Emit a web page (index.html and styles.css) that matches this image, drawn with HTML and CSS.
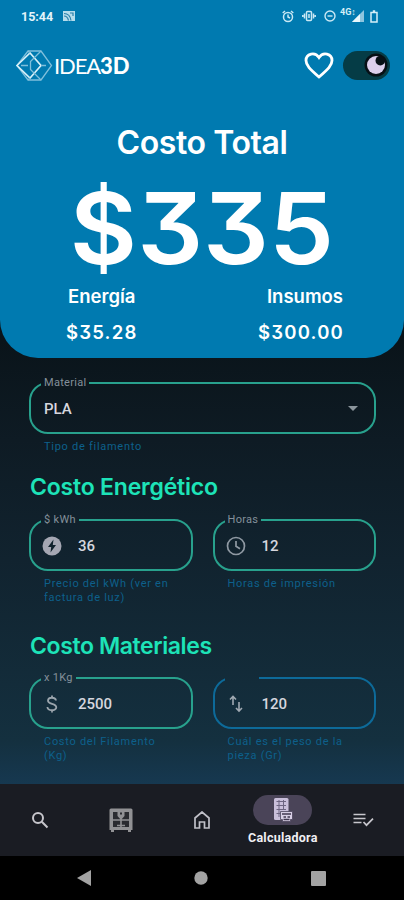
FILE: index.html
```html
<!DOCTYPE html>
<html lang="es">
  <head>
    <meta charset="UTF-8" />
    <meta name="viewport" content="width=device-width, initial-scale=1.0" />
    <title>IDEA3D - Calculadora</title>
    <link rel="stylesheet" href="styles.css">
  </head>
  <body>
    <header class="hero">
      <div class="status">
        <span class="time">15:44</span>
        <svg class="cast" width="14" height="12" viewBox="0 0 14 12"><path d="M1 1h12v10H1z" fill="#b5dcec" /><path d="M2 3.5q6 0 7 7M2 6q3.500 0 4.500 4.500M8 3h3v3" fill="none" stroke="#287fa9" stroke-width="1.200" /></svg>
        <div class="status-icons">
          <svg width="12" height="13" viewBox="0 0 12 13" fill="none" stroke="#c9e8f4" stroke-width="1.500"><circle cx="6" cy="7" r="4.500" /><path d="M6 4.500V7l2 1M.7 3 3 1M11.300 3 9 1" /></svg>
          <svg width="14" height="12" viewBox="0 0 14 12" fill="none" stroke="#c9e8f4" stroke-width="1.500"><rect x="4.500" y="1.500" width="5" height="9" rx="1" /><path d="M2.500 3.500v5M11.500 3.500v5M.8 5v2M13.200 5v2M7 4v4" /></svg>
          <svg width="12" height="12" viewBox="0 0 12 12" fill="none" stroke="#c9e8f4" stroke-width="1.400"><circle cx="6" cy="6" r="5" /><path d="M3.500 6h5" /></svg>
          <span class="net">4G↕</span>
          <svg class="signal" width="12" height="12" viewBox="0 0 12 12"><path d="M0 12 12 0v12z" fill="#8dc5df" /><path d="M0 12 8 4v8z" fill="#e8f7fc" /></svg>
          <svg class="battery" width="8" height="13" viewBox="0 0 8 13" fill="none" stroke="#d5eff7" stroke-width="1.500"><path d="M1 2.500h6v9.500H1zM2.800 1h2.400" /></svg>
        </div>
      </div>

      <div class="appbar">
        <svg class="cube" width="37" height="31" viewBox="0 0 37 31" fill="none" stroke="#a9d7ea" stroke-width="1.300">
          <path d="M1 15.500 12 1h13l10.500 14.500L25 30H12z" stroke="#7fbfdb" />
          <path d="M1 15.500 14 3l11 12.500L14 28z" stroke="#d8f0f8" stroke-width="1.600" />
          <path d="M14 3 12 1M14 28l-2 2M25 1 14.500 11.500v8L25 30M5 15.500h7M25 15.500h5" stroke="#7fbfdb" />
        </svg>
        <div class="brand"><span>IDEA</span><b>3D</b></div>
        <svg class="heart" width="30" height="27" viewBox="0 0 30 27"><path d="M15 25 C6 17 2 13.500 2 8.500 C2 1.500 11 -.5 15 5.500 C19 -.5 28 1.500 28 8.500 C28 13.500 24 17 15 25z" fill="none" stroke="#fff" stroke-width="2.800" /></svg>
        <div class="switch">
          <svg width="24" height="24" viewBox="0 0 24 24"><circle cx="12" cy="12" r="11.500" fill="#071016" /><circle cx="12" cy="12" r="9" fill="#dccfec" /><circle cx="16.300" cy="7.700" r="4.800" fill="#071016" /></svg>
        </div>
      </div>

      <h1>Costo Total</h1>
      <div class="total">$335</div>
      <div class="breakdown">
        <div class="energy">
          <h3>Energía</h3>
          <p>$35.28</p>
        </div>
        <div class="supplies">
          <h3>Insumos</h3>
          <p>$300.00</p>
        </div>
      </div>
    </header>

    <main>
      <div class="field">
        <fieldset>
          <legend>Material</legend>
          <span class="value">PLA</span>
          <svg class="caret" width="10" height="5" viewBox="0 0 10 5"><path d="M0 0h10L5 5z" fill="#8b959c" /></svg>
        </fieldset>
        <p class="hint">Tipo de filamento</p>
      </div>

      <h2>Costo Energético</h2>
      <div class="row">
        <div class="field">
          <fieldset>
            <legend>$ kWh</legend>
            <svg class="lead" width="20" height="20" viewBox="0 0 20 20"><circle cx="10" cy="10" r="9.500" fill="#a5a7b3" /><path d="M11.500 3.500 6 11h3.200L8.500 16.500 14 9h-3.200z" fill="#10222d" /></svg>
            <span class="value">36</span>
          </fieldset>
          <p class="hint">Precio del kWh (ver en<br>factura de luz)</p>
        </div>
        <div class="field">
          <fieldset>
            <legend>Horas</legend>
            <svg class="lead" width="20" height="20" viewBox="0 0 20 20" fill="none" stroke="#8f99a3" stroke-width="1.700"><circle cx="10" cy="10" r="8.500" /><path d="M10 5v5.300l4 2.400" /></svg>
            <span class="value">12</span>
          </fieldset>
          <p class="hint">Horas de impresión</p>
        </div>
      </div>

      <h2 class="materials">Costo Materiales</h2>
      <div class="row">
        <div class="field">
          <fieldset>
            <legend>x 1Kg</legend>
            <svg class="lead" width="20" height="20" viewBox="0 0 20 20" fill="none" stroke="#9ba5ad" stroke-width="1.800"><path d="M14 6.500C13.500 2.800 6 2.800 6 6.700c0 3.800 8.300 2.500 8.300 6.600 0 4-8.600 4-8.900-.3M10 1.500v3M10 15.500v3" /></svg>
            <span class="value">2500</span>
          </fieldset>
          <p class="hint">Costo del Filamento<br>(Kg)</p>
        </div>
        <div class="field focused">
          <fieldset>
            <legend></legend>
            <svg class="lead" width="20" height="20" viewBox="0 0 20 20" fill="none" stroke="#a0a9b2" stroke-width="1.600"><path d="M7 11V3M4 5.500 7 2.500l3 3M13 8v8.500M10 14l3 3 3-3" /></svg>
            <span class="value">120</span>
          </fieldset>
          <p class="hint">Cuál es el peso de la<br>pieza (Gr)</p>
        </div>
      </div>
    </main>

    <nav class="tabs">
      <a><svg width="18" height="18" viewBox="0 0 18 18" fill="none" stroke="#c7c6cc" stroke-width="2"><circle cx="7" cy="7" r="5" /><path d="m10.800 10.800 5.700 5.700" /></svg></a>
      <a>
        <svg width="24" height="25" viewBox="0 0 24 25">
          <path d="M2 .5h20q1.500 0 1.500 1.500v20H22v2h-3v-2H5v2H2v-2H.5V2Q.5.500 2 .5z" fill="#919194" />
          <path d="M4 4h16v15H4z" fill="#2a2b30" />
          <path d="M4 12h16M12 10v9M8 17.500h8" fill="none" stroke="#919194" stroke-width="1.600" />
          <path d="M8.500 4h7v4L12 12 8.500 8z" fill="#919194" />
          <path d="M11 4.500h2v2h-2z" fill="#2a2b30" />
        </svg>
      </a>
      <a><svg width="16" height="18" viewBox="0 0 16 18" fill="none" stroke="#c0c0c8" stroke-width="1.700"><path d="M1 7 8 1l7 6v10h-4.500v-6h-5v6H1z" /></svg></a>
      <a class="active">
        <span class="pill">
          <svg width="20" height="25" viewBox="0 0 20 25">
            <rect x="1" y="1" width="14.500" height="22" rx="1.500" fill="#c9bfda" />
            <path d="M3.500 4.500h9.500M3.500 8.500h9.500M3.500 12.500h9.500M3.500 16.500h4M6 3v17M10.500 3v10" stroke="#6d6581" stroke-width="1" />
            <path d="M7.500 14.500h12v8h-2v2h-8v-2h-2z" fill="#d8cfe5" stroke="#4a435b" stroke-width=".8" />
            <path d="M9 17h9M10.500 20h2.500M14.500 20h2.500M10.500 22.500h6" stroke="#40384f" stroke-width="1.300" />
          </svg>
        </span>
        <span>Calculadora</span>
      </a>
      <a><svg width="21" height="14" viewBox="0 0 21 14" fill="none" stroke="#c7c6cc" stroke-width="1.700"><path d="M.5 1.500h12M.5 5.500h12M.5 9.500h8M10.500 9l3 3.200 6.500-6.500" /></svg></a>
    </nav>

    <div class="sysnav">
      <svg width="14" height="16" viewBox="0 0 14 16"><path d="M14 0v16L0 8z" fill="#a3a3a3" /></svg>
      <svg width="14" height="14" viewBox="0 0 14 14"><circle cx="7" cy="7" r="6.700" fill="#a3a3a3" /></svg>
      <svg width="15" height="15" viewBox="0 0 15 15"><rect width="15" height="15" rx="1" fill="#a3a3a3" /></svg>
    </div>
  </body>
</html>
```
FILE: styles.css
```css
:root {
  --blue: #007ab0;
  --teal: #28a18d;
  --mint: #1de3b8;
}

* {
  box-sizing: border-box;
}
body {
  margin: 0;
  height: 900px;
  overflow: hidden;
  display: flex;
  flex-direction: column;
  font-family: Roboto, sans-serif;
  background: linear-gradient(#0a141a 340px, #0e1b24 440px, #11232f 560px, #14303f 740px, #163850 784px);
}
h1,
h2,
h3,
p {
  margin: 0;
}
svg {
  display: block;
  flex: none;
}

.hero {
  height: 358px;
  flex: none;
  background: var(--blue);
  border-radius: 0 0 38px 38px;
  color: #fff;
  font-family: Inter, sans-serif;
  font-feature-settings: "cv09";
}
.status {
  display: flex;
  align-items: center;
  height: 32px;
  padding: 0 26px 0 21px;
  font-family: Roboto, sans-serif;
}
.time {
  font-size: 12.5px;
  font-weight: 700;
  color: #e3f4fa;
}
.cast {
  margin-left: 9px;
}
.status-icons {
  display: flex;
  align-items: center;
  margin-left: auto;
}
.status-icons svg + svg {
  margin-left: 8px;
}
.net {
  margin-left: 4px;
  font-size: 9px;
  font-weight: 700;
  line-height: 8px;
  padding-bottom: 8px;
  width: 12px;
  white-space: nowrap;
  color: #d5eff7;
}
.status-icons .battery {
  margin-left: 6px;
}

.appbar {
  display: flex;
  align-items: center;
  height: 66px;
  padding: 0 14px 0 16px;
}
.brand {
  margin-left: 1px;
  font-family: Lato, sans-serif;
  font-size: 22px;
  font-weight: 400;
  white-space: nowrap;
}
.brand span {
  letter-spacing: -1.1px;
}
.brand b {
  font-weight: 900;
}
.heart {
  margin-left: auto;
}
.switch {
  display: flex;
  align-items: center;
  justify-content: flex-end;
  width: 47px;
  height: 29px;
  margin-left: 9px;
  padding-right: 2px;
  border-radius: 15px;
  background: #053c46;
}

h1 {
  margin-top: 23px;
  font-size: 32px;
  font-weight: 600;
  line-height: 44px;
  letter-spacing: -0.4px;
  text-align: center;
}
.total {
  height: 121px;
  font-size: 99px;
  font-weight: 600;
  line-height: 127px;
  text-align: center;
  transform: scaleX(1.045);
}
.breakdown {
  display: flex;
  justify-content: space-between;
  padding: 0 60px 0 66px;
}
.breakdown h3,
.breakdown p {
  font-size: 18.5px;
  font-weight: 600;
  line-height: 20px;
}
.breakdown h3 {
  padding: 0 1px 0 2px;
}
.breakdown p {
  margin-top: 16px;
  letter-spacing: 1.2px;
}
.supplies {
  text-align: right;
}

main {
  height: 426px;
  flex: none;
  padding: 18px 28px 0 29px;
}
fieldset {
  display: flex;
  align-items: center;
  height: 58px;
  margin: 0;
  padding: 0 16px 5px 13px;
  border: 2px solid var(--teal);
  border-radius: 19px;
}
legend {
  height: 14px;
  margin-left: -3px;
  padding: 0 3px;
  font-size: 11px;
  line-height: 14px;
  letter-spacing: 0.3px;
  color: #84909a;
}
.value {
  font-size: 15px;
  font-weight: 500;
  color: #d6d6de;
}
.lead {
  margin: 0 16px 0 -2px;
}
.caret {
  margin-left: auto;
}
.hint {
  padding: 6px 0 0 15px;
  font-size: 11px;
  line-height: 14px;
  letter-spacing: 0.72px;
  white-space: nowrap;
  color: #0d608b;
}

h2 {
  margin: 18px 0 11px 1px;
  font-family: Inter, sans-serif;
  font-size: 23px;
  font-weight: 600;
  line-height: 30px;
  letter-spacing: -0.2px;
  color: var(--mint);
}
h2.materials {
  margin: 26px 0 10px 1px;
  letter-spacing: -0.4px;
}
.row {
  display: grid;
  grid-template-columns: 1fr 1fr;
  gap: 20px;
}
.row .field {
  min-width: 0;
}
.focused fieldset {
  border-color: #0d6a99;
}
.focused legend {
  width: 34px;
}

.tabs {
  display: grid;
  grid-template-columns: repeat(5, 1fr);
  align-items: center;
  height: 72px;
  flex: none;
  background: #1a1c23;
}
.tabs a {
  display: flex;
  flex-direction: column;
  align-items: center;
}
.active {
  color: #f0eff4;
  font-size: 12.5px;
  font-weight: 700;
  line-height: 16px;
  letter-spacing: 0.25px;
}
.pill {
  display: flex;
  align-items: center;
  justify-content: center;
  width: 59px;
  height: 30px;
  margin-bottom: 5px;
  border-radius: 15px;
  background: #4a4458;
}

.sysnav {
  display: flex;
  align-items: center;
  justify-content: space-between;
  height: 44px;
  flex: none;
  padding: 0 78px 0 77px;
  background: #000;
}
```
